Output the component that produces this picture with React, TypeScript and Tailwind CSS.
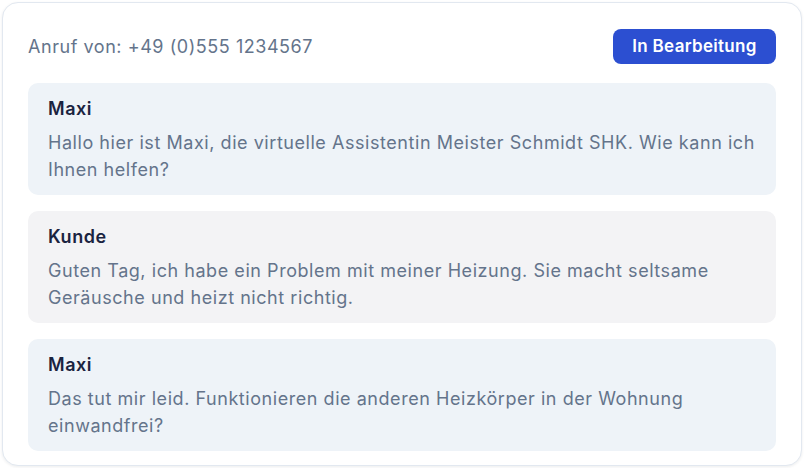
import React from "react";

type Msg = { speaker: string; text: string; tone: "assistant" | "customer" };

const messages: Msg[] = [
  {
    speaker: "Maxi",
    text: "Hallo hier ist Maxi, die virtuelle Assistentin Meister Schmidt SHK. Wie kann ich Ihnen helfen?",
    tone: "assistant",
  },
  {
    speaker: "Kunde",
    text: "Guten Tag, ich habe ein Problem mit meiner Heizung. Sie macht seltsame Geräusche und heizt nicht richtig.",
    tone: "customer",
  },
  {
    speaker: "Maxi",
    text: "Das tut mir leid. Funktionieren die anderen Heizkörper in der Wohnung einwandfrei?",
    tone: "assistant",
  },
];

export default function App() {
  return (
    <div className="bg-white p-[2px] font-['Inter',sans-serif] tracking-[0.55px]">
      <div className="w-[800px] rounded-2xl border border-[#e2e8f0] bg-white px-[25px] pt-[26px] pb-[14px] shadow-[0_1px_3px_rgba(15,23,42,0.08)]">
        {/* Header */}
        <div className="mb-[19px] flex h-[35px] items-center justify-between">
          <p className="text-[18px] text-[#64748b]">Anruf von: +49 (0)555 1234567</p>
          <span className="flex h-[35px] w-[163px] items-center justify-center rounded-lg bg-[#2c4fd1] text-[17px] font-semibold tracking-[0.3px] text-white">
            In Bearbeitung
          </span>
        </div>

        {/* Transcript */}
        <div className="space-y-4">
          {messages.map((m, i) => (
            <div
              key={i}
              className={`rounded-[10px] px-5 py-3 ${
                m.tone === "assistant" ? "bg-[#eef3f8]" : "bg-[#f3f3f5]"
              }`}
            >
              <p className="mb-[7px] text-[18px] leading-[27px] font-semibold text-[#1a2340]">
                {m.speaker}
              </p>
              <p className="text-[18px] leading-[27px] text-[#64748b]">{m.text}</p>
            </div>
          ))}
        </div>
      </div>
    </div>
  );
}
